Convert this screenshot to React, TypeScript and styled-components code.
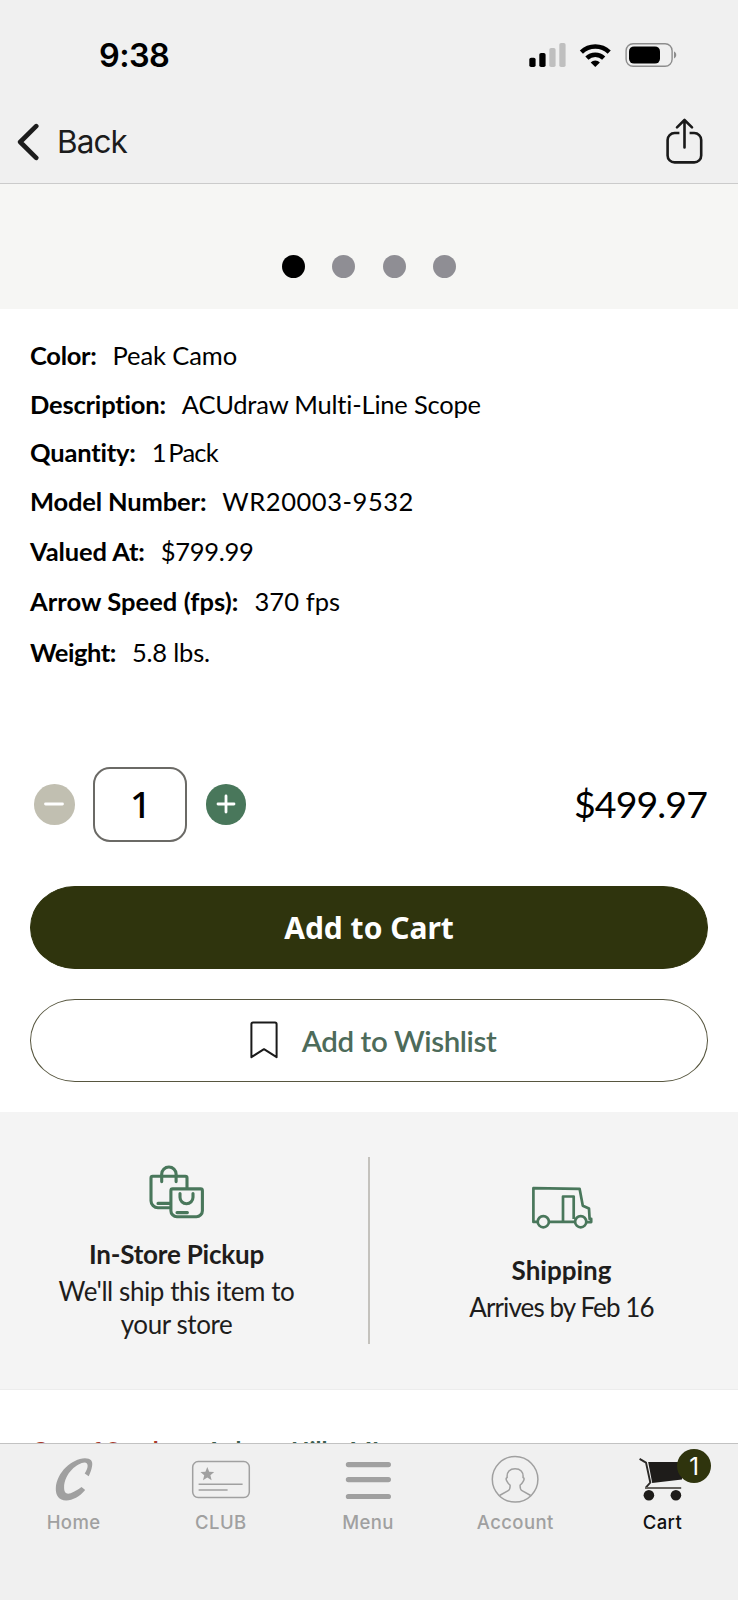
import React from "react";
import styled, { createGlobalStyle } from "styled-components";

const GlobalStyle = createGlobalStyle`
  *, *::before, *::after { box-sizing: border-box; }
  body { margin: 0; background: #fff; -webkit-font-smoothing: antialiased; }
  svg { display: block; flex: none; }
  button { appearance: none; border: 0; padding: 0; margin: 0; background: none; font: inherit; color: inherit; }
`;

const brandFont = `Lato, "Open Sans", sans-serif`;
const systemFont = `Inter, "Liberation Sans", sans-serif`;

const Screen = styled.div`
  width: 738px;
  height: 1600px;
  display: flex;
  flex-direction: column;
  overflow: hidden;
  background: #fff;
  color: #000;
  font-family: ${brandFont};
  font-variant-ligatures: none;
`;

const Header = styled.header`
  flex: none;
  height: 184px;
  background: #f0f0f0;
  border-bottom: 1px solid #cbcbcb;
  font-family: ${systemFont};
`;

const StatusBar = styled.div`
  height: 100px;
  padding: 10px 58px 0 99px;
  display: flex;
  align-items: center;
  justify-content: space-between;
`;

const Clock = styled.span`
  font-size: 32.5px;
  font-weight: 600;
  letter-spacing: -0.6px;
`;

const NavBar = styled.div`
  height: 83px;
  padding: 0 35px 0 16px;
  display: flex;
  align-items: center;
  justify-content: space-between;
`;

const BackButton = styled.button`
  display: flex;
  align-items: center;
  gap: 17px;
  padding-top: 1px;
  font-size: 31.5px;
  line-height: 38px;
  letter-spacing: -0.9px;
  color: #1c1c1c;
`;

const Content = styled.main`
  flex: 1;
  min-height: 0;
  overflow: hidden;
`;

const Gallery = styled.div`
  height: 125px;
  padding-top: 71px;
  display: flex;
  justify-content: center;
  gap: 27.6px;
  background: #f6f6f4;
`;

const Dot = styled.span<{ $active?: boolean }>`
  width: 23px;
  height: 23px;
  border-radius: 50%;
  background: ${(p) => (p.$active ? "#000" : "#8f8e94")};
`;

const Details = styled.dl`
  margin: 0;
  padding: 14px 30px 0;
`;

const DetailRow = styled.div<{ $tall?: boolean }>`
  height: ${(p) => (p.$tall ? 50.4 : 48.4)}px;
  display: flex;
  align-items: flex-end;
  gap: 16px;
  font-size: 25.5px;
  line-height: 32px;
  white-space: nowrap;
`;

const Label = styled.dt<{ $tracking: number }>`
  font-weight: 700;
  letter-spacing: ${(p) => p.$tracking}px;
`;

const Value = styled.dd<{ $tracking: number; $wordGap?: number }>`
  margin: 0;
  letter-spacing: ${(p) => p.$tracking}px;
  word-spacing: ${(p) => p.$wordGap ?? 0}px;
`;

const Purchase = styled.section`
  padding: 98.6px 30px 0;
`;

const QuantityRow = styled.div`
  height: 76px;
  padding-left: 4px;
  display: flex;
  align-items: center;
`;

const RoundButton = styled.button<{ $color: string }>`
  width: 40.6px;
  height: 40.6px;
  border-radius: 50%;
  display: grid;
  place-items: center;
  background: ${(p) => p.$color};
`;

const QuantityBox = styled.div`
  width: 94px;
  height: 75px;
  margin: 0 18.3px 0 18.9px;
  border: 2px solid #6b6a66;
  border-radius: 17px;
  display: grid;
  place-items: center;
  font-family: "Noto Sans", sans-serif;
  font-size: 37px;
  font-weight: 500;
  line-height: 44px;
`;

const Price = styled.span`
  margin-left: auto;
  margin-right: 1px;
  font-size: 37.5px;
  line-height: 44px;
  letter-spacing: -0.9px;
`;

const PillButton = styled.button<{ $primary?: boolean }>`
  width: 100%;
  height: 83px;
  margin-top: ${(p) => (p.$primary ? 44 : 30)}px;
  padding: ${(p) => (p.$primary ? "0" : "0 0 1px 8px")};
  border: 1px solid ${(p) => (p.$primary ? "#2f340d" : "#57563f")};
  border-radius: 45px / 41.5px;
  display: flex;
  align-items: center;
  justify-content: center;
  gap: 24px;
  background: ${(p) => (p.$primary ? "#2f340d" : "#fff")};
  color: ${(p) => (p.$primary ? "#fff" : "#4d6b5a")};
  font-family: ${(p) => (p.$primary ? `"Noto Sans", sans-serif` : brandFont)};
  font-size: ${(p) => (p.$primary ? 30 : 29.5)}px;
  font-weight: ${(p) => (p.$primary ? 700 : 600)};
  letter-spacing: ${(p) => (p.$primary ? 0 : -0.4)}px;
`;

const Fulfillment = styled.section`
  height: 278px;
  margin-top: 29.4px;
  display: flex;
  align-items: center;
  background: #f4f4f4;
  border-bottom: 1px solid #ececec;
  color: #1e1d1c;
`;

const FulfillmentOption = styled.div<{ $side: "left" | "right" }>`
  flex: 1;
  padding: ${(p) => (p.$side === "left" ? "5px 15px 0 0" : "9px 0 0 15px")};
  display: flex;
  flex-direction: column;
  align-items: center;
  text-align: center;
  font-size: 26px;
  line-height: 33px;
`;

const OptionTitle = styled.strong<{ $tracking: number; $gap: number }>`
  margin-top: ${(p) => p.$gap}px;
  margin-bottom: 3px;
  line-height: 36px;
  letter-spacing: ${(p) => p.$tracking}px;
`;

const OptionText = styled.span<{ $tracking: number }>`
  letter-spacing: ${(p) => p.$tracking}px;
`;

const Divider = styled.div`
  width: 2px;
  height: 187px;
  background: #c4c2bd;
`;

const StockLine = styled.p`
  margin: 0;
  padding: 45px 0 0 31px;
  display: flex;
  gap: 40px;
  font-size: 24px;
  line-height: 32px;
  white-space: nowrap;
`;

const StockStatus = styled.span`
  color: #a8392b;
  font-weight: 700;
`;

const StoreName = styled.span`
  color: #3c5f4e;
  font-weight: 700;
`;

const TabBar = styled.nav`
  flex: none;
  height: 157px;
  padding: 8px 2px 0 0;
  display: flex;
  background: #f0f0f0;
  border-top: 1px solid #c2c2c2;
  font-family: ${systemFont};
`;

const Tab = styled.a<{ $active?: boolean }>`
  position: relative;
  flex: 1;
  display: flex;
  flex-direction: column;
  align-items: center;
  gap: 3px;
  color: ${(p) => (p.$active ? "#111" : "#a0a0a0")};
  font-size: 18.5px;
  font-weight: 500;
  line-height: 23px;
  letter-spacing: 0.4px;
`;

const Badge = styled.span`
  position: absolute;
  top: -3px;
  right: 25px;
  width: 34px;
  height: 34px;
  border-radius: 50%;
  display: grid;
  place-items: center;
  background: #2f340d;
  color: #fff;
  font-size: 24px;
  font-weight: 400;
  letter-spacing: 0;
`;

const StatusIcons = () => (
  <svg width="154" height="26" viewBox="0 0 154 26">
    <rect x="3.3" y="15.7" width="6.3" height="9.3" rx="1.8" />
    <rect x="13.3" y="11" width="6.3" height="14" rx="1.8" />
    <rect x="23.3" y="6" width="6.3" height="19" rx="1.8" fill="#bfbfbf" />
    <rect x="33.3" y="1" width="6.3" height="24" rx="1.8" fill="#bfbfbf" />
    <g fill="none" stroke="#000" strokeWidth="4.5">
      <path d="M55.4 10.2a20 20 0 0 1 27.8 0" />
      <path d="M60.9 16.2a12 12 0 0 1 16.8 0" />
    </g>
    <path d="M69.3 25 64.7 20.4a6.6 6.6 0 0 1 9.2 0Z" />
    <rect x="100.1" y="1.7" width="46" height="22.6" rx="7" fill="none" stroke="#8d8d8d" strokeWidth="1.4" />
    <rect x="103" y="4.4" width="31" height="17.2" rx="5" />
    <path d="M148 9.6c3 1.2 3 5.6 0 6.8Z" fill="#8d8d8d" />
  </svg>
);

const ChevronIcon = () => (
  <svg width="24" height="38" viewBox="0 0 24 38" fill="none" stroke="#1c1c1c" strokeWidth="4.7" strokeLinecap="round" strokeLinejoin="round">
    <path d="M20.2 3.2 4.2 19l16 15.8" />
  </svg>
);

const ShareIcon = () => (
  <svg width="38" height="50" viewBox="0 0 38 50" fill="none" stroke="#1a1a1a" strokeWidth="2.6">
    <path d="M14.4 16H9.6a7 7 0 0 0-7 7v15.4a7 7 0 0 0 7 7h19.6a7 7 0 0 0 7-7V23a7 7 0 0 0-7-7h-4.6" />
    <path d="M19.5 30.4V3.4M12 10.4l7.5-7.4 7.5 7.4" strokeLinecap="round" strokeLinejoin="round" />
  </svg>
);

const MinusIcon = () => (
  <svg width="22" height="22" viewBox="0 0 22 22" stroke="#fff" strokeWidth="2.8" strokeLinecap="round">
    <path d="M2.5 11h17" />
  </svg>
);

const PlusIcon = () => (
  <svg width="22" height="22" viewBox="0 0 22 22" stroke="#fff" strokeWidth="2.8" strokeLinecap="round">
    <path d="M3 11h16M11 3v16" />
  </svg>
);

const BookmarkIcon = () => (
  <svg width="28" height="38" viewBox="0 0 28 38" fill="none" stroke="#1a1a1a" strokeWidth="2" strokeLinejoin="round">
    <path d="M1.4 3.2q0-1.6 1.6-1.6h22q1.6 0 1.6 1.6V36.2L14 28.2 1.4 36.2Z" />
  </svg>
);

const BagsIcon = () => (
  <svg width="57" height="56" viewBox="0 0 57 56" fill="none" stroke="#49775b" strokeWidth="3.1" strokeLinecap="round" strokeLinejoin="round">
    <path d="M39 23.6V14q0-1.7-1.7-1.7H4.7Q3 12.3 3 14v22.7a7 7 0 0 0 7 7h12" />
    <path d="M13.7 17.6V10a7.2 7 0 0 1 14.4 0v7.6M10 39.4h12" />
    <path d="M24.6 24.9h28q1.8 0 1.8 1.8v20a6 6 0 0 1-6 6H28.9a6 6 0 0 1-6-6v-20q0-1.8 1.7-1.8Z" />
    <path d="M32 29.6v3.6a6.5 6.5 0 0 0 13 0v-3.6M29 48.6h10.4" />
  </svg>
);

const TruckIcon = () => (
  <svg width="62" height="45" viewBox="0 0 62 45" fill="none" stroke="#49775b" strokeWidth="2.7" strokeLinejoin="round">
    <path d="M6.6 36.9H2.4V3.2l46.2.6 3.2 17 6.2 2.8.6 10.2h1.6v3.3h-4.6M18 36.9h26" />
    <path d="M32 36.9V11.5h10.7V34" />
    <circle cx="12.3" cy="36.7" r="5.6" />
    <circle cx="49.7" cy="36.7" r="5.6" />
  </svg>
);

const HomeIcon = () => (
  <svg width="64" height="56" viewBox="0.5 0 64 56" fill="#a0a0a0">
    <path d="M43.2 21.4c3.6-5.4 4.3-10.8-.2-11C36.5 10.6 22.6 21 22.6 35.6c0 9.6 7.4 6.600 17.4-.6l3.7 3c-5.6 6.8-13 10.6-19.2 10.4C17.6 48.2 14 43.4 14.3 36.2 15 20.4 30.4 6.600 43.4 6.200c6 0 8.200 3 7.200 7.800-.6 3.600-1.800 7.200-3.400 10.200Z" />
  </svg>
);

const ClubIcon = () => (
  <svg width="64" height="56" viewBox="0 0 64 56" fill="none" stroke="#a0a0a0" strokeWidth="1.5">
    <rect x="3.7" y="9.6" width="56.6" height="36" rx="5.5" />
    <path d="M9.6 32.3h44M9.6 38h29" />
    <path d="m18.3 15 1.9 4.7 5 .4-3.8 3.2 1.2 4.9-4.3-2.6-4.3 2.6 1.2-4.9-3.8-3.2 5-.4Z" fill="#a0a0a0" stroke="none" />
  </svg>
);

const MenuIcon = () => (
  <svg width="64" height="56" viewBox="0 0 64 56" stroke="#a0a0a0" strokeWidth="5.2" strokeLinecap="round">
    <path d="M12.4 12.6h40M12.4 27.6h40M12.4 44.5h40" />
  </svg>
);

const AccountIcon = () => (
  <svg width="64" height="56" viewBox="-1.2 0 64 56" fill="none" stroke="#a0a0a0" strokeWidth="1.5" strokeLinejoin="round">
    <circle cx="30.9" cy="27.3" r="22.8" />
    <path d="M15.3 43.5 24 38.6c2-1 2-3 1.9-5.4-1.6-.8-2.3-2.4-3.5-4.6-.9-1.7-.4-2.8.6-3.1-.7-5.8 2.8-8.8 7.9-8.8s8.6 3 7.9 8.8c1 .3 1.5 1.4.6 3.1-1.2 2.2-1.9 3.8-3.5 4.6-.1 2.4-.1 4.4 1.9 5.4l8.7 4.9" />
  </svg>
);

const CartIcon = () => (
  <svg width="64" height="56" viewBox="-2 0 64 56">
    <path d="M7.6 6.9 14 10.6l4.3 20-4.5 5" fill="none" stroke="#2a2826" strokeWidth="1.9" />
    <path d="M13 35.9h36.2" stroke="#66635f" strokeWidth="2" />
    <path d="M16.2 10H50v17.4L20.2 31Z" fill="#1e1c1a" />
    <circle cx="16.9" cy="43.3" r="5.3" fill="#1e1c1a" />
    <circle cx="43.9" cy="43.3" r="5.3" fill="#1e1c1a" />
  </svg>
);

const details = [
  { label: "Color:", value: "Peak Camo", lt: -0.3, vt: -0.1 },
  { label: "Description:", value: "ACUdraw Multi-Line Scope", lt: -0.2, vt: -0.2 },
  { label: "Quantity:", value: "1 Pack", lt: -0.2, vt: -0.8, wordGap: -3 },
  { label: "Model Number:", value: "WR20003-9532", lt: -0.15, vt: 0.55 },
  { label: "Valued At:", value: "$799.99", lt: -0.1, vt: -0.3, tall: true },
  { label: "Arrow Speed (fps):", value: "370 fps", lt: 0.05, vt: 0.1, tall: true },
  { label: "Weight:", value: "5.8 lbs.", lt: -0.45, vt: -0.2, tall: true },
];

export default function App() {
  return (
    <Screen>
      <GlobalStyle />
      <Header>
        <StatusBar>
          <Clock>9:38</Clock>
          <StatusIcons />
        </StatusBar>
        <NavBar>
          <BackButton>
            <ChevronIcon />
            Back
          </BackButton>
          <ShareIcon />
        </NavBar>
      </Header>
      <Content>
        <Gallery>
          <Dot $active />
          <Dot />
          <Dot />
          <Dot />
        </Gallery>
        <Details>
          {details.map((d) => (
            <DetailRow key={d.label} $tall={d.tall}>
              <Label $tracking={d.lt}>{d.label}</Label>
              <Value $tracking={d.vt} $wordGap={d.wordGap}>{d.value}</Value>
            </DetailRow>
          ))}
        </Details>
        <Purchase>
          <QuantityRow>
            <RoundButton $color="#c1bfb1" aria-label="Decrease quantity">
              <MinusIcon />
            </RoundButton>
            <QuantityBox>1</QuantityBox>
            <RoundButton $color="#49775b" aria-label="Increase quantity">
              <PlusIcon />
            </RoundButton>
            <Price>$499.97</Price>
          </QuantityRow>
          <PillButton $primary>Add to Cart</PillButton>
          <PillButton>
            <BookmarkIcon />
            Add to Wishlist
          </PillButton>
        </Purchase>
        <Fulfillment>
          <FulfillmentOption $side="left">
            <BagsIcon />
            <OptionTitle $tracking={-0.2} $gap={16}>In-Store Pickup</OptionTitle>
            <OptionText $tracking={-0.42}>
              We'll ship this item to
              <br />
              your store
            </OptionText>
          </FulfillmentOption>
          <Divider />
          <FulfillmentOption $side="right">
            <TruckIcon />
            <OptionTitle $tracking={0} $gap={21.5}>Shipping</OptionTitle>
            <OptionText $tracking={-0.9}>Arrives by Feb 16</OptionText>
          </FulfillmentOption>
        </Fulfillment>
        <StockLine>
          <StockStatus>Out of Stock</StockStatus>
          <StoreName>Auburn Hills, MI</StoreName>
        </StockLine>
      </Content>
      <TabBar>
        <Tab>
          <HomeIcon />
          Home
        </Tab>
        <Tab>
          <ClubIcon />
          CLUB
        </Tab>
        <Tab>
          <MenuIcon />
          Menu
        </Tab>
        <Tab>
          <AccountIcon />
          Account
        </Tab>
        <Tab $active>
          <CartIcon />
          Cart
          <Badge>1</Badge>
        </Tab>
      </TabBar>
    </Screen>
  );
}
